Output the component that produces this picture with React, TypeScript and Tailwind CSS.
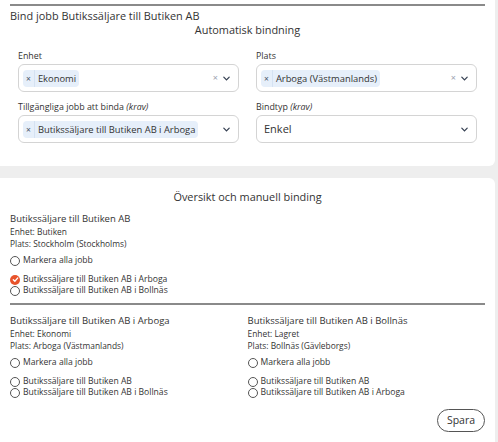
import React from "react";

const font = { fontFamily: '"Open Sans", "Noto Sans", sans-serif' };

function Chevron() {
  return (
    <svg width="9" height="9" viewBox="0 0 10 10" className="text-gray-700">
      <path d="M2 3.5 L5 6.5 L8 3.5" fill="none" stroke="currentColor" strokeWidth="1.4" strokeLinecap="round" />
    </svg>
  );
}

function Tag({ label }: { label: string }) {
  return (
    <span className="flex items-center bg-[#e6effa] rounded-sm text-[9.4px] text-[#333] leading-[17px] whitespace-nowrap">
      <span className="px-[3px] text-[8.5px] text-gray-600 border-r border-[#d5e2f2]">×</span>
      <span className="px-[3px]">{label}</span>
    </span>
  );
}

function Select({ children, clear }: { children: React.ReactNode; clear?: boolean }) {
  return (
    <div className="h-[28px] border border-[#d4d4d4] rounded-md flex items-center pl-[4px] pr-[7px]">
      <div className="flex-1 flex items-center">{children}</div>
      {clear && <span className="text-[9px] text-gray-400 mr-[4px]">×</span>}
      <Chevron />
    </div>
  );
}

function Field({ label, req, children }: { label: string; req?: boolean; children: React.ReactNode }) {
  return (
    <div className="flex flex-col">
      <div className="text-[8.9px] text-[#333] mb-[2px] leading-[12px]">
        {label} {req && <i>(krav)</i>}
      </div>
      {children}
    </div>
  );
}

function Radio({ label, checked }: { label: string; checked?: boolean }) {
  return (
    <div className="flex items-center gap-[3px] text-[8.6px] text-[#333] leading-[11px] h-[11px] whitespace-nowrap">
      {checked ? (
        <span className="w-[10px] h-[10px] rounded-full bg-[#e8532b] flex items-center justify-center">
          <svg width="7" height="7" viewBox="0 0 8 8">
            <path d="M1.5 4.2 L3.3 6 L6.6 2.2" fill="none" stroke="white" strokeWidth="1.5" strokeLinecap="round" />
          </svg>
        </span>
      ) : (
        <span className="w-[10px] h-[10px] rounded-full border border-[#555]" />
      )}
      <span>{label}</span>
    </div>
  );
}

type Job = { title: string; enhet: string; plats: string; items: { label: string; checked?: boolean }[] };

function JobBlock({ job }: { job: Job }) {
  return (
    <div className="flex flex-col text-[#333]">
      <div className="text-[9.5px] leading-[14px]">{job.title}</div>
      <div className="text-[8.4px] leading-[12px]">Enhet: {job.enhet}</div>
      <div className="text-[8.4px] leading-[12px]">Plats: {job.plats}</div>
      <div className="mt-[5px]">
        <Radio label="Markera alla jobb" />
      </div>
      <div className="mt-[8px] flex flex-col">
        {job.items.map((it) => (
          <Radio key={it.label} label={it.label} checked={it.checked} />
        ))}
      </div>
    </div>
  );
}

export default function App() {
  const main: Job = {
    title: "Butikssäljare till Butiken AB",
    enhet: "Butiken",
    plats: "Stockholm (Stockholms)",
    items: [
      { label: "Butikssäljare till Butiken AB i Arboga", checked: true },
      { label: "Butikssäljare till Butiken AB i Bollnäs" },
    ],
  };
  const others: Job[] = [
    {
      title: "Butikssäljare till Butiken AB i Arboga",
      enhet: "Ekonomi",
      plats: "Arboga (Västmanlands)",
      items: [{ label: "Butikssäljare till Butiken AB" }, { label: "Butikssäljare till Butiken AB i Bollnäs" }],
    },
    {
      title: "Butikssäljare till Butiken AB i Bollnäs",
      enhet: "Lagret",
      plats: "Bollnäs (Gävleborgs)",
      items: [{ label: "Butikssäljare till Butiken AB" }, { label: "Butikssäljare till Butiken AB i Arboga" }],
    },
  ];

  return (
    <div className="w-[498px] h-[442px] bg-[#eeeeee] overflow-hidden" style={font}>
      {/* Automatisk bindning */}
      <section className="bg-white mr-[3px] rounded-br-md h-[166px] pt-[4px]">
        <div className="mx-[10px] border-t-2 border-[#8a8a8a]" />
        <h1 className="px-[10px] mt-[3px] text-[10.9px] leading-[14px] text-[#333]">
          Bind jobb Butikssäljare till Butiken AB
        </h1>
        <h2 className="text-center text-[10.9px] leading-[14px] text-[#333]">Automatisk bindning</h2>
        <div className="grid grid-cols-2 gap-x-[17px] gap-y-[9px] px-[18px] mt-[13px]">
          <Field label="Enhet">
            <Select clear>
              <Tag label="Ekonomi" />
            </Select>
          </Field>
          <Field label="Plats">
            <Select clear>
              <Tag label="Arboga (Västmanlands)" />
            </Select>
          </Field>
          <Field label="Tillgängliga jobb att binda" req>
            <Select>
              <Tag label="Butikssäljare till Butiken AB i Arboga" />
            </Select>
          </Field>
          <Field label="Bindtyp" req>
            <Select>
              <span className="text-[11px] text-[#333] pl-[3px]">Enkel</span>
            </Select>
          </Field>
        </div>
      </section>

      {/* Översikt och manuell binding */}
      <section className="bg-white mr-[3px] rounded-tr-md mt-[12px] h-[270px] pt-[12px] px-[10px]">
        <h2 className="text-center text-[10.9px] leading-[14px] text-[#333]">Översikt och manuell binding</h2>
        <div className="mt-[8px]">
          <JobBlock job={main} />
        </div>
        <div className="border-t-2 border-[#8a8a8a] mt-[7px]" />
        <div className="grid grid-cols-2 mt-[9px]">
          {others.map((j) => (
            <JobBlock key={j.title} job={j} />
          ))}
        </div>
        <div className="flex justify-end mt-[11px]">
          <button className="h-[23px] w-[48px] rounded-full border-[1.5px] border-[#555] text-[10.5px] text-[#333]">
            Spara
          </button>
        </div>
      </section>
    </div>
  );
}
